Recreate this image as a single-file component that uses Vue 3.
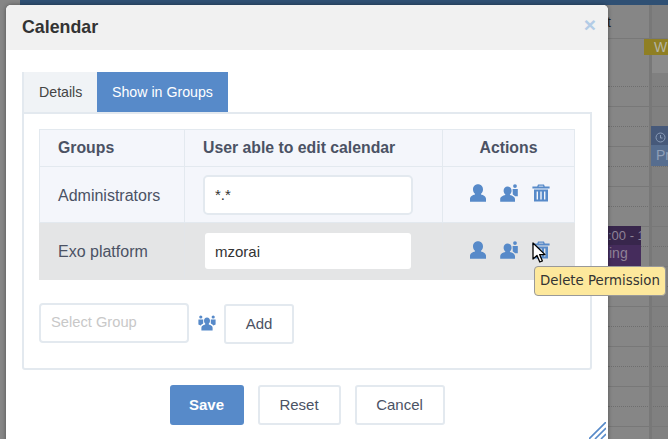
<template>
  <div class="page">
    <div class="topbar"></div>

    <!-- calendar behind the backdrop -->
    <div class="calendar">
      <div class="col-right"></div>
      <div class="grid-lines">
        <div v-for="n in 19" :key="n" class="grid-row" :class="n % 2 ? 'dotted' : 'solid'"></div>
      </div>
      <div class="col-stripe"></div>
      <span class="stray">t</span>
      <div class="ev-week">W</div>
      <div class="ev-week-below"></div>
      <div class="ev-blue">
        <div class="ev-head">
          <svg width="11" height="11" viewBox="0 0 11 11"><circle cx="5.5" cy="5.5" r="4.5" fill="none" stroke="#8a9cb8" stroke-width="1" /><path d="M5.5 3v3h2" fill="none" stroke="#8a9cb8" /></svg>
        </div>
        <div class="ev-body">Pr</div>
      </div>
      <div class="ev-purple">
        <div class="ev-head">:00 - 17</div>
        <div class="ev-body">ing</div>
      </div>
    </div>

    <section class="modal">
      <header class="modal-head">
        <h2>Calendar</h2>
        <span class="close">×</span>
      </header>

      <div class="modal-body">
        <nav class="tabs">
          <a class="tab">Details</a>
          <a class="tab active">Show in Groups</a>
        </nav>

        <div class="panel">
          <table>
            <colgroup>
              <col style="width: 145px" />
              <col style="width: 258px" />
              <col />
            </colgroup>
            <thead>
              <tr>
                <th>Groups</th>
                <th>User able to edit calendar</th>
                <th class="center">Actions</th>
              </tr>
            </thead>
            <tbody>
              <tr v-for="row in rows" :key="row.name" :class="{ hovered: row.hovered }">
                <td class="name">{{ row.name }}</td>
                <td><input class="user-input" :value="row.user" /></td>
                <td class="actions">
                  <svg class="ico" width="17" height="18" viewBox="0 0 17 18"><path :d="userPath" /></svg>
                  <svg class="ico" width="19" height="18" viewBox="0 0 19 18"><path :d="userPlusPath" /></svg>
                  <svg class="ico" width="18" height="18" viewBox="0 0 18 18"><path :d="trashPath" fill-rule="evenodd" /></svg>
                </td>
              </tr>
            </tbody>
          </table>

          <div class="add-row">
            <input class="group-input" placeholder="Select Group" />
            <svg class="ico people" width="18" height="16" viewBox="0 0 18 16"><path :d="peoplePath" /></svg>
            <button class="btn">Add</button>
          </div>
        </div>

        <footer class="modal-foot">
          <button class="btn primary">Save</button>
          <button class="btn">Reset</button>
          <button class="btn">Cancel</button>
        </footer>
      </div>

      <svg class="resize" width="17" height="17" viewBox="0 0 17 17">
        <path d="M0 17L17 0M6 17L17 6M12 17L17 12" stroke="#578ac9" stroke-width="1.6" fill="none" />
      </svg>
    </section>

    <div class="tooltip">Delete Permission</div>

    <svg class="cursor" width="14" height="22" viewBox="0 0 14 22">
      <path d="M1 1v16l4-3.5 2.8 6.5 2.6-1.1-2.8-6.3H13z" fill="#fff" stroke="#000" stroke-width="1.3" stroke-linejoin="round" />
    </svg>
  </div>
</template>

<script setup>
const rows = [
  { name: "Administrators", user: "*.*", hovered: false },
  { name: "Exo platform", user: "mzorai", hovered: true },
];

const userPath =
  "M8 0.3C10.9 0.3 13 2.5 13 5.4 13 7.2 12.2 8.7 11 9.7V10.4C13.4 11 16 12.3 16 14.8V17.7H0V14.8C0 12.3 2.6 11 5 10.4V9.7C3.8 8.7 3 7.2 3 5.4 3 2.5 5.1 0.3 8 0.3Z";
const userPlusPath =
  "M7.6 2.6C10 2.6 11.6 4.4 11.6 6.8 11.6 8.3 10.9 9.6 9.9 10.4V11.1C12.3 11.7 15 12.9 15 15.2V17.7H0.2V15.2C0.2 12.9 2.9 11.7 5.3 11.1V10.4C4.3 9.6 3.6 8.3 3.6 6.8 3.6 4.4 5.2 2.6 7.6 2.6ZM15 0.2A1.9 1.9 0 1 1 15 4 1.9 1.9 0 1 1 15 0.2ZM12.6 5H17.8V12.2H15C14.4 11.5 13.6 11 12.8 10.6Z";
const trashPath =
  "M6 0.6H12L12.8 2.6H17.6V4.4H0.4V2.6H5.2ZM7 1.8 6.6 2.6H11.4L11 1.8ZM2 5.4H16V17.6H2ZM4.6 7.4V15.6H6V7.4ZM8.3 7.4V15.6H9.7V7.4ZM12 7.4V15.6H13.4V7.4Z";
const peoplePath =
  "M9 2.6C10.9 2.6 12 4 12 5.8 12 7 11.5 8 10.8 8.6V9.6C13 10.2 14.6 11 14.6 12.8V15.4H3.4V12.8C3.4 11 5 10.2 7.2 9.6V8.6C6.5 8 6 7 6 5.8 6 4 7.1 2.6 9 2.6ZM2.8 0.4A1.6 1.6 0 1 1 2.8 3.6 1.6 1.6 0 1 1 2.8 0.4ZM15.2 0.4A1.6 1.6 0 1 1 15.2 3.6 1.6 1.6 0 1 1 15.2 0.4ZM0.4 4.4H5.2V8.4L3.6 9.6 2.6 10.6 0.4 9.4ZM12.8 4.4H17.6V9.4L15.4 10.6 14.4 9.6 12.8 8.4Z";
</script>

<style>
html,
body {
  margin: 0;
  overflow: hidden;
}
</style>

<style scoped>
.page {
  position: relative;
  width: 668px;
  height: 439px;
  overflow: hidden;
  background: #868686;
  font-family: "Liberation Sans", Arial, sans-serif;
  color: #4b5264;
}

.topbar {
  height: 5px;
  margin-left: 20px;
  background: #2f5074;
}

.calendar {
  position: absolute;
  inset: 6px 0 0 0;
}

.col-right {
  position: absolute;
  left: 652px;
  right: 0;
  top: -1px;
  bottom: 0;
  background: #808080;
}

.grid-lines {
  position: absolute;
  left: 608px;
  right: 0;
  top: 61px;
}

.grid-lines::before {
  content: "";
  position: absolute;
  left: 0;
  right: 0;
  top: -29px;
  height: 1px;
  background: #787878;
}

.grid-row {
  box-sizing: border-box;
  height: 20px;
}

.grid-row.dotted {
  border-bottom: 1px dotted #6e6e6e;
}

.grid-row.solid {
  border-bottom: 1px solid #787878;
}

.col-stripe {
  position: absolute;
  left: 649px;
  top: -1px;
  bottom: 0;
  width: 3px;
  background: #787878;
}

.stray {
  position: absolute;
  left: 607px;
  top: 8px;
  font-size: 14px;
  color: #222;
}

.ev-week {
  position: absolute;
  left: 644px;
  right: 0;
  top: 33px;
  height: 16px;
  padding-left: 10px;
  background: #8f7f23;
  color: #b5b5a5;
  font-size: 14px;
  line-height: 16px;
}

.ev-week-below {
  position: absolute;
  left: 652px;
  right: 0;
  top: 49px;
  height: 18px;
  background: #8b8b8b;
}

.ev-blue {
  position: absolute;
  left: 651px;
  right: 0;
  top: 120px;
  height: 40px;
  background: #566d8f;
  color: #8f9fb8;
  font-size: 14px;
  overflow: hidden;
}

.ev-blue .ev-head {
  height: 19px;
  padding: 4px 0 0 4px;
  box-sizing: border-box;
  background: #46597a;
}

.ev-blue .ev-body {
  padding-left: 5px;
  line-height: 20px;
}

.ev-purple {
  position: absolute;
  left: 608px;
  width: 33px;
  top: 220px;
  height: 40px;
  background: #452c5c;
  color: #8f8296;
  font-size: 13px;
  white-space: nowrap;
  overflow: hidden;
}

.ev-purple .ev-head {
  height: 19px;
  line-height: 20px;
  background: #38264c;
}

.ev-purple .ev-body {
  padding-left: 1px;
  font-size: 14px;
  line-height: 17px;
}

.modal {
  position: absolute;
  left: 6px;
  top: 5px;
  width: 602px;
  height: 440px;
  border-radius: 5px 5px 0 0;
  background: #fff;
  box-shadow: 0 0 4px rgba(0, 0, 0, 0.4);
}

.modal-head {
  height: 45px;
  display: flex;
  align-items: center;
  justify-content: space-between;
  padding: 0 12px 0 16px;
  background: #f1f1f1;
  border-radius: 5px 5px 0 0;
}

.modal-head h2 {
  margin: 0;
  font-size: 17.8px;
  color: #333;
}

.close {
  margin-top: -6px;
  font-size: 21px;
  font-weight: bold;
  line-height: 1;
  color: #b3cce6;
}

.modal-body {
  padding: 22px 16px 0;
}

.tabs {
  display: flex;
  width: fit-content;
  height: 40px;
  border-left: 2px solid #e3e9ef;
  font-size: 14.2px;
}

.tab {
  width: 73px;
  padding-left: 15px;
  box-sizing: border-box;
  line-height: 40px;
  background: #f0f3f6;
  color: #454545;
}

.tab.active {
  width: 131px;
  padding-left: 15px;
  background: #578ac9;
  color: #fff;
}

.panel {
  box-sizing: border-box;
  width: 570px;
  height: 258px;
  padding: 15px;
  border: 2px solid #e3e9ef;
  border-radius: 0 0 3px 3px;
}

table {
  width: 536px;
  table-layout: fixed;
  border-collapse: collapse;
  font-size: 16px;
}

th,
td {
  padding: 0 0 0 18px;
  border: 1px solid #e3e9ef;
  background: #f4f6fb;
  text-align: left;
}

th {
  height: 36px;
  font-size: 15.8px;
  font-weight: bold;
}

td {
  box-sizing: border-box;
  height: 56px;
}

td.name {
  padding-top: 2px;
}

th.center {
  padding: 0;
  text-align: center;
}

tr.hovered td {
  height: 57px;
  background: #e4e5e6;
  border-color: #e2e5e9;
  border-bottom-color: #e4e5e6;
}

tr.hovered td:first-child {
  border-left-color: #e4e5e6;
}

tr.hovered td:last-child {
  border-right-color: #e4e5e6;
}

input {
  display: block;
  box-sizing: border-box;
  font: inherit;
  font-size: 15px;
  color: #333;
  outline: none;
  background: #fff;
}

.user-input {
  width: 210px;
  height: 40px;
  padding: 0 10px;
  border: 2px solid #e3e9ef;
  border-radius: 5px;
}

tr.hovered .user-input {
  width: 206px;
  height: 36px;
  margin-left: 2px;
  border: 0;
  border-radius: 3px;
}

.actions {
  text-align: left;
  padding-left: 27px;
  white-space: nowrap;
}

.ico {
  fill: #578ac9;
}

.actions .ico {
  margin: 0 13px 3px 0;
  vertical-align: middle;
}

.add-row {
  display: flex;
  align-items: flex-start;
  margin-top: 23px;
}

.group-input {
  width: 150px;
  height: 40px;
  padding: 0 10px 2px;
  border: 2px solid #e3e9ef;
  border-radius: 4px;
  font-size: 14.7px;
}

.group-input::placeholder {
  color: #c8c8c8;
  opacity: 1;
}

.people {
  margin: 12px 8px 0 9px;
}

.btn {
  height: 40px;
  padding: 0 0 1px;
  font: inherit;
  font-size: 15px;
  color: #4b5264;
  background: #fff;
  border: 2px solid #e3e9ef;
  border-radius: 3px;
}

.add-row .btn {
  width: 70px;
  margin-top: 1px;
}

.modal-foot {
  display: flex;
  justify-content: center;
  gap: 14px;
  margin-top: 15px;
}

.modal-foot .btn {
  width: 83px;
}

.modal-foot .btn:last-child {
  width: 90px;
}

.modal-foot .btn.primary {
  width: 74px;
  border-color: #578ac9;
  background: #578ac9;
  color: #fff;
  font-weight: bold;
}

.resize {
  position: absolute;
  left: 583px;
  top: 417px;
}

.tooltip {
  position: absolute;
  left: 534px;
  top: 266px;
  padding: 0 5px;
  height: 28px;
  line-height: 28px;
  font-family: "DejaVu Sans", sans-serif;
  font-size: 13.33px;
  color: #333;
  background: #fde89c;
  border: 1px solid #999;
  border-radius: 4px;
  white-space: nowrap;
}

.cursor {
  position: absolute;
  left: 532px;
  top: 242px;
}
</style>
